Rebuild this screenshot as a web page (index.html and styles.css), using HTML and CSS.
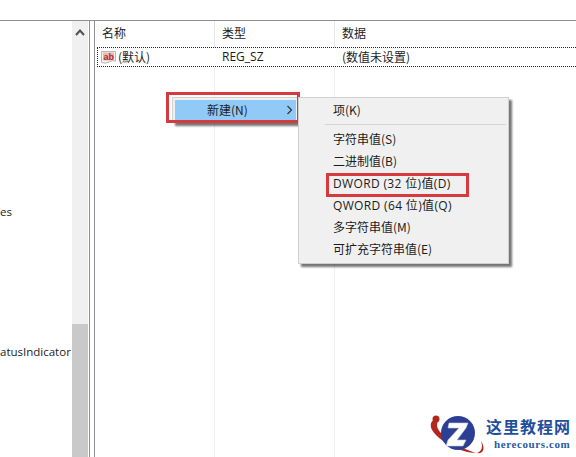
FILE: index.html
```html
<!DOCTYPE html>
<html lang="zh-CN">
<head>
<meta charset="utf-8">
<title>注册表编辑器</title>
<link rel="stylesheet" href="styles.css">
</head>
<body>
<div class="top-gap"></div>
<main class="app">
  <section class="tree">
    <div class="tree-list">
      <div class="tree-item first">es</div>
      <div class="tree-item second">atusIndicator</div>
    </div>
    <div class="scrollbar">
      <div class="scroll-up">
        <svg width="16" height="20" viewBox="0 0 16 20"><path d="M4 14 L8 9.500 L12 14" fill="none" stroke="#505050" stroke-width="2"/></svg>
      </div>
      <div class="scroll-track"></div>
      <div class="scroll-thumb"></div>
    </div>
  </section>
  <div class="splitter"></div>
  <section class="values">
    <div class="head">
      <div class="col c1">名称</div>
      <div class="col c2">类型</div>
      <div class="col c3">数据</div>
    </div>
    <div class="row">
      <div class="cell c1">
        <svg class="ab" width="17" height="15" viewBox="0 0 17 15">
          <path d="M1.500 1.500 H15.500 V11 Q12 10 9 12 Q5 14 1.500 12.500 Z" fill="#f6f3f1" stroke="#b9b4b4"/>
          <rect x="3" y="2.500" width="11" height="8" fill="#e8b9b9"/>
          <text x="3.500" y="9.500" class="ab-text">ab</text>
        </svg>
        <span>(默认)</span>
      </div>
      <div class="cell c2">REG_SZ</div>
      <div class="cell c3">(数值未设置)</div>
    </div>
    <div class="body-lines">
      <div class="line c1"></div>
      <div class="line c2"></div>
      <div class="line c3"></div>
    </div>
  </section>
</main>

<div class="menu menu-main">
  <div class="menu-item active">
    <span>新建(N)</span>
    <svg width="7" height="10" viewBox="0 0 7 10"><path d="M1.500 1 L5.500 5 L1.500 9" fill="none" stroke="#333" stroke-width="1.200"/></svg>
  </div>
</div>
<div class="redbox box-main"></div>

<div class="menu menu-sub">
  <div class="sub-item">项(K)</div>
  <div class="sep"></div>
  <div class="sub-item">字符串值(S)</div>
  <div class="sub-item">二进制值(B)</div>
  <div class="sub-item wide">DWORD (32 位)值(D)</div>
  <div class="sub-item wide">QWORD (64 位)值(Q)</div>
  <div class="sub-item">多字符串值(M)</div>
  <div class="sub-item">可扩充字符串值(E)</div>
</div>
<div class="redbox box-sub"></div>

<div class="logo">
  <svg width="57" height="42" viewBox="0 0 57 42">
    <path d="M6 5 C-1 9 1 16 9 23 C20 33 36 39 48 39 C42 38 27 32 16 23 C8 16 6 11 10 6 Z" fill="#b3261e"/>
    <circle cx="7" cy="5" r="3.500" fill="#b3261e"/>
    <path d="M48 39 C54 40 57 35 52 27 C54 33 53 37 48 39 Z" fill="#b3261e"/>
    <circle cx="29" cy="19" r="17" fill="#2c3f94"/>
    <path d="M20 9 H39 L37 14 L28 26 H37 L34 32 H17 L19 26 L30 14 H19 Z" fill="#fff" stroke="#c4c9dc" stroke-width=".6"/>
  </svg>
  <div class="logo-text">
    <div class="logo-cn">这里教程网</div>
    <div class="logo-en">herecours.com</div>
  </div>
</div>
</body>
</html>
```
FILE: styles.css
```css
* { box-sizing: border-box; }
html, body { margin: 0; padding: 0; }
body {
  width: 576px;
  height: 457px;
  position: relative;
  overflow: hidden;
  background: #fff;
  color: #1c1c1c;
  font-family: "Noto Sans CJK SC", "Open Sans", sans-serif;
  font-size: 12px;
}
.top-gap { height: 20px; }
.app {
  display: flex;
  height: 437px;
  border-top: 1px solid #8f8f8f;
}
.tree {
  width: 90px;
  display: flex;
  border-right: 1px solid #8f8f98;
}
.tree-list { width: 72px; font-family: "Open Sans", sans-serif; }
.tree-item { line-height: 16px; white-space: nowrap; font-size: 11.500px; }
.tree-item.first { margin-top: 183px; }
.tree-item.second { margin-top: 124px; }
.scrollbar {
  width: 16px;
  display: flex;
  flex-direction: column;
  background: #f0f0f0;
}
.scroll-up { height: 20px; }
.scroll-up svg { display: block; }
.scroll-track { height: 283px; }
.scroll-thumb { flex: 1; background: #c9c9c9; }
.splitter { width: 4px; }
.values {
  flex: 1;
  border-left: 1px solid #8f8f98;
  display: flex;
  flex-direction: column;
}
.c1 { width: 120px; }
.c2 { width: 120px; }
.c3 { flex: 1; }
.head { display: flex; height: 26px; }
.col {
  padding: 3px 0 0 7px;
  line-height: 18px;
  border-right: 1px solid #e6e6e6;
}
.col.c3 { border-right: 0; }
.row {
  display: flex;
  height: 20px;
  margin-left: 2px;
  border: 1px dotted #222;
  border-right: 0;
}
.cell { display: flex; align-items: center; line-height: 18px; }
.cell.c1 { width: 118px; padding-left: 2px; gap: 1px; }
.cell.c2 { padding-left: 6px; font-family: "Open Sans", sans-serif; }
.cell.c3 { padding-left: 6px; }
.ab { display: block; }
.ab-text { font: bold 9px "Liberation Sans", sans-serif; fill: #b02c2c; }
.body-lines { flex: 1; display: flex; }
.line { border-right: 1px solid #efefef; }
.line.c3 { border-right: 0; }

.menu {
  position: absolute;
  background: #f0f0f0;
  border: 1px solid #d0d0d0;
  box-shadow: 3px 3px 2px rgba(60, 60, 60, .7);
}
.menu-main { left: 172px; top: 97px; width: 127px; height: 26px; padding: 2px; }
.menu-item {
  display: flex;
  justify-content: space-between;
  align-items: center;
  height: 21px;
  padding: 0 3px 2px 32px;
  font-size: 12px;
}
.menu-item.active { background: #91c9f7; }
.menu-sub { left: 298px; top: 97px; width: 211px; height: 167px; padding-top: 1px; }
.sub-item {
  height: 22px;
  padding-left: 34px;
  line-height: 22px;
  white-space: nowrap;
  font-size: 12px;
}
.sub-item.wide {
  font-family: "Open Sans", "Noto Sans CJK SC", sans-serif;
  letter-spacing: .35px;
  line-height: 24px;
}
.sep { height: 1px; background: #d4d4d4; margin: 3px 2px 3px 26px; }

.redbox { position: absolute; border: 3px solid #d63a3f; }
.box-main { left: 166px; top: 92px; width: 134px; height: 31px; }
.box-sub { left: 326px; top: 173px; width: 143px; height: 24px; }

.logo {
  position: absolute;
  left: 429px;
  top: 414px;
  display: flex;
}
.logo-text { padding-top: 3px; white-space: nowrap; }
.logo-cn {
  font-weight: 700;
  font-size: 16px;
  line-height: 19px;
  letter-spacing: 1px;
  color: #1f4f9c;
}
.logo-en {
  font: bold 11px/13px "Liberation Serif", serif;
  color: #2a5a9e;
  letter-spacing: .6px;
  margin: 2px 0 0 8px;
}
```
